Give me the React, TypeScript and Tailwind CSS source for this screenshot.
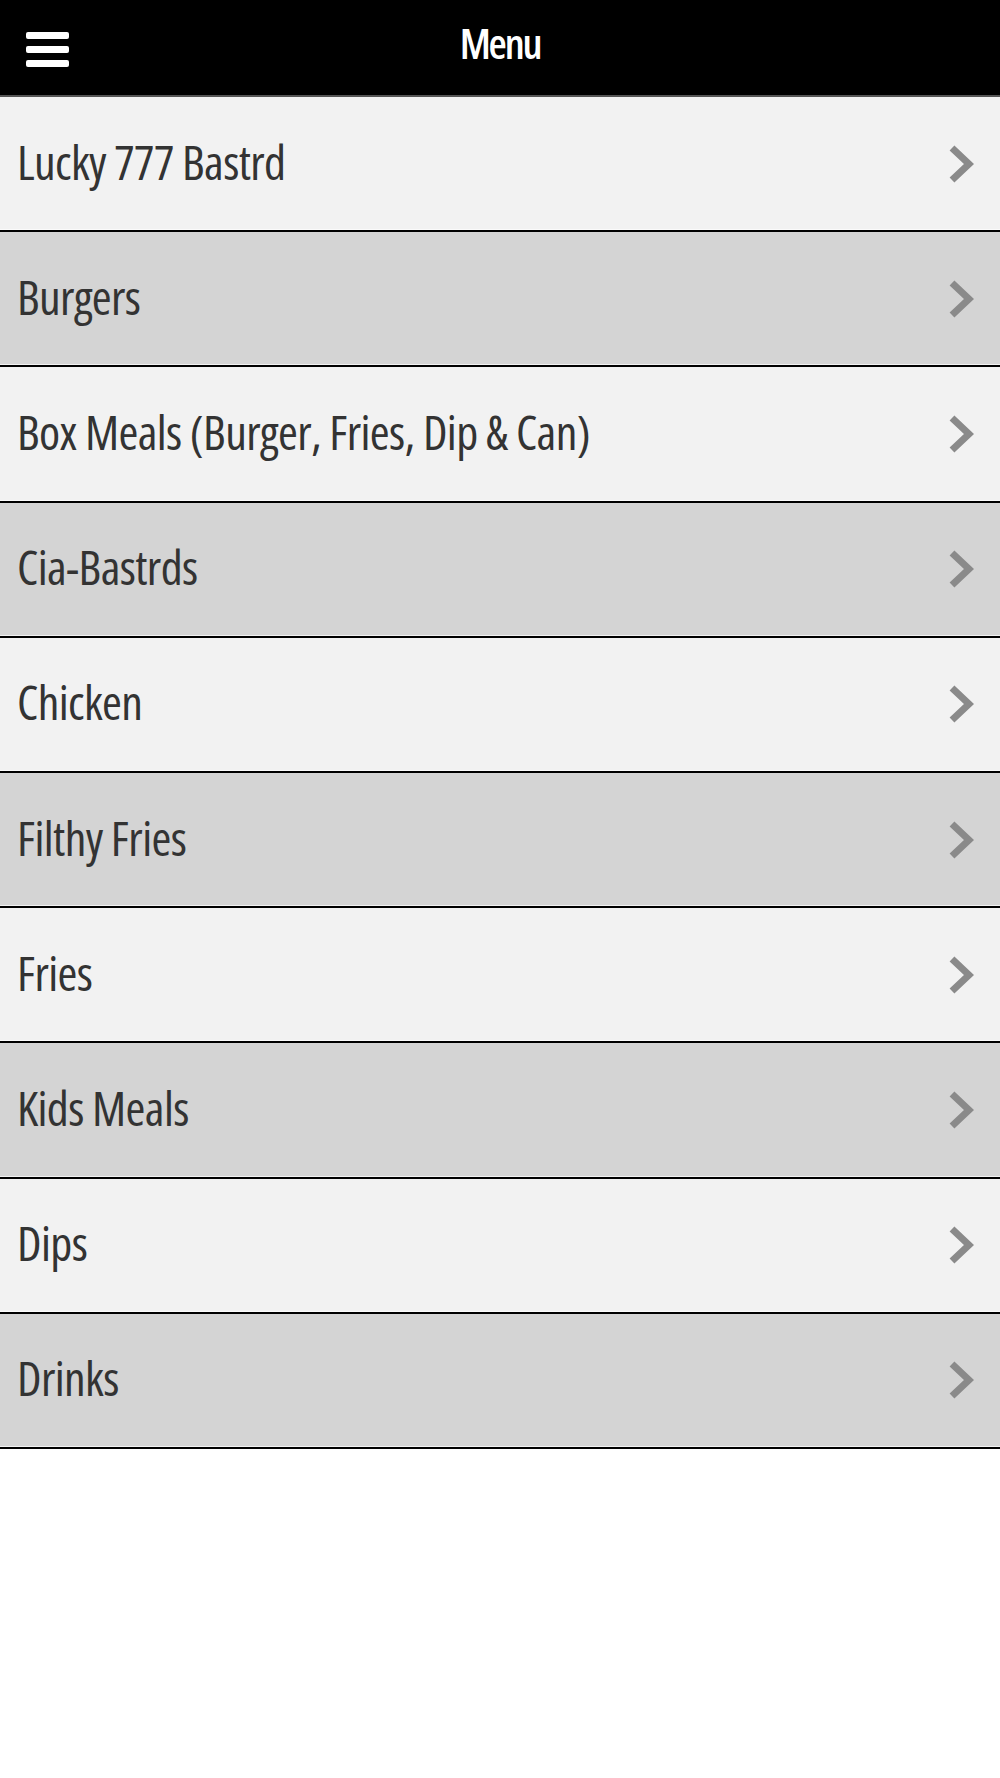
const items = [
  'Lucky 777 Bastrd',
  'Burgers',
  'Box Meals (Burger, Fries, Dip & Can)',
  'Cia-Bastrds',
  'Chicken',
  'Filthy Fries',
  'Fries',
  'Kids Meals',
  'Dips',
  'Drinks',
];

const Chevron = () => (
  <svg width="26" height="40" viewBox="0 0 26 40" className="shrink-0">
    <polyline
      points="4,4 21,20 4,36"
      fill="none"
      stroke="#8a8a8a"
      strokeWidth="7"
      strokeLinejoin="miter"
      strokeLinecap="butt"
    />
  </svg>
);

const Hamburger = () => (
  <div className="flex flex-col gap-[7px] w-[43px]">
    <span className="block h-[7px] rounded-[2px] bg-white" />
    <span className="block h-[7px] rounded-[2px] bg-white" />
    <span className="block h-[7px] rounded-[2px] bg-white" />
  </div>
);

export default function App() {
  return (
    <div className="min-h-[1778px] bg-white font-['Open_Sans',sans-serif] font-stretch-condensed">
      {/* Top bar */}
      <header className="relative h-[97px] bg-black border-b-2 border-[#555] flex items-center justify-center">
        <button className="absolute left-[26px] top-[32px]">
          <Hamburger />
        </button>
        <h1 className="text-white text-[42px] font-semibold tracking-[-2.2px] leading-none -mt-[10px]">Menu</h1>
      </header>

      {/* Menu list */}
      <ul>
        {items.map((item, i) => (
          <li
            key={item}
            className={`h-[135.2px] border-b-2 border-black shadow-[inset_0_-1px_0_rgba(255,255,255,0.7)] flex items-center justify-between pl-[17px] pr-[26px] ${
              i % 2 === 0 ? 'bg-[#f2f2f2]' : 'bg-[#d4d4d4]'
            }`}
          >
            <span className="text-[48px] font-medium leading-none tracking-[-0.6px] text-[#333] whitespace-nowrap -mt-[4px]">
              {item}
            </span>
            <Chevron />
          </li>
        ))}
      </ul>
    </div>
  );
}
